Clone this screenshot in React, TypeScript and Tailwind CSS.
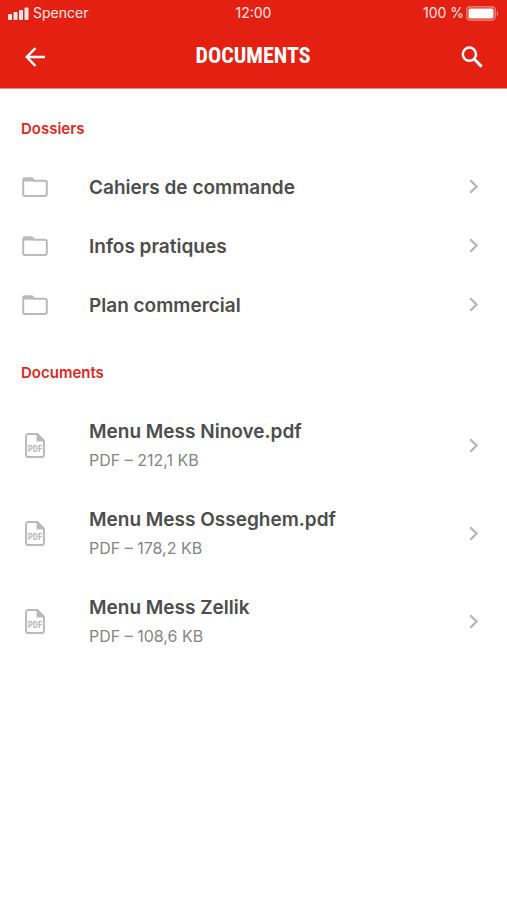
interface DocumentItem {
  name: string
  details: string
}

const folders: string[] = ['Cahiers de commande', 'Infos pratiques', 'Plan commercial']

const documents: DocumentItem[] = [
  { name: 'Menu Mess Ninove.pdf', details: 'PDF – 212,1 KB' },
  { name: 'Menu Mess Osseghem.pdf', details: 'PDF – 178,2 KB' },
  { name: 'Menu Mess Zellik', details: 'PDF – 108,6 KB' },
]

function SignalIcon() {
  return (
    <svg width="21" height="13" viewBox="0 0 21 13" fill="currentColor" aria-hidden="true">
      <rect x="0" y="7" width="4" height="6" rx="1" />
      <rect x="5.5" y="5" width="4" height="8" rx="1" />
      <rect x="11" y="3" width="4" height="10" rx="1" />
      <rect x="16.5" y="0.5" width="4" height="12.5" rx="1" />
    </svg>
  )
}

function BatteryIcon() {
  return (
    <svg width="33" height="15" viewBox="0 0 33 15" aria-hidden="true">
      <rect x="0.8" y="0.8" width="28.4" height="13.4" rx="3.5" fill="none" stroke="#fff" strokeOpacity="0.5" strokeWidth="1.2" />
      <rect x="2.5" y="2.5" width="25" height="10" rx="1.5" fill="#fff" />
      <path d="M30.8 5.2c1.6.6 1.6 4 0 4.6z" fill="#fff" fillOpacity="0.6" />
    </svg>
  )
}

function BackIcon() {
  return (
    <svg width="20" height="20" viewBox="0 0 20 20" fill="none" stroke="currentColor" strokeWidth="2.5" aria-hidden="true">
      <path d="M10.5 1 1.8 10l8.7 9M2 10h18" />
    </svg>
  )
}

function SearchIcon() {
  return (
    <svg width="22" height="22" viewBox="0 0 22 22" fill="none" stroke="currentColor" aria-hidden="true">
      <circle cx="8.4" cy="8.2" r="6.6" strokeWidth="2.5" />
      <path d="m13.2 13 7.4 7.6" strokeWidth="3" />
    </svg>
  )
}

function FolderIcon() {
  return (
    <svg width="26" height="20" viewBox="0 0 26 20" aria-hidden="true">
      <path d="M3 1.2h6.8l2.4 2.6H23a1.8 1.8 0 0 1 1.8 1.8v11.6A1.8 1.8 0 0 1 23 19H3a1.8 1.8 0 0 1-1.8-1.8V3A1.8 1.8 0 0 1 3 1.2z" fill="none" stroke="#bababa" strokeWidth="2" />
      <path d="M2 1.5h7.6l2.4 3H2z" fill="#bababa" />
    </svg>
  )
}

function PdfIcon() {
  return (
    <svg width="20" height="25" viewBox="0 0 20 25" aria-hidden="true">
      <path d="M3 1.1h9.5l6.4 6.6V22a1.9 1.9 0 0 1-1.9 1.9H3A1.9 1.9 0 0 1 1.1 22V3A1.9 1.9 0 0 1 3 1.1z" fill="none" stroke="#bababa" strokeWidth="2" />
      <path d="M11.5 1 19 8.5h-7.5z" fill="#bababa" />
      <text
        x="10"
        y="18.5"
        textAnchor="middle"
        fontSize="9"
        fill="#b0b0b0"
        className="font-['Roboto_Condensed','Roboto',sans-serif] font-medium"
      >
        PDF
      </text>
    </svg>
  )
}

function ChevronIcon() {
  return (
    <svg width="10" height="15" viewBox="0 0 10 15" fill="none" stroke="#b5b5b5" strokeWidth="2.2" aria-hidden="true">
      <path d="m1.2 1.2 6.4 6.3-6.4 6.3" />
    </svg>
  )
}

function SectionTitle({ children }: { children: string }) {
  return <h2 className="mb-[18px] text-[15px] leading-5 font-semibold text-[#dc291e]">{children}</h2>
}

export default function App() {
  return (
    <div className="min-h-screen bg-white font-['Inter','Liberation_Sans',sans-serif]">
      <header className="border-b border-[#f0897f] bg-[#e42013] text-white">
        <div className="grid h-[26px] grid-cols-3 items-center px-2 text-sm text-white/90">
          <div className="flex items-center gap-1">
            <SignalIcon />
            <span>Spencer</span>
          </div>
          <span className="text-center">12:00</span>
          <div className="flex items-center justify-end gap-0.5">
            <span>100 %</span>
            <BatteryIcon />
          </div>
        </div>
        <div className="flex h-[62px] items-center justify-between pr-6 pl-[25px]">
          <button type="button" aria-label="Retour">
            <BackIcon />
          </button>
          <h1 className="pb-0.5 font-['Roboto_Condensed','Roboto',sans-serif] text-[22px] leading-7 font-bold">
            DOCUMENTS
          </h1>
          <button type="button" aria-label="Rechercher">
            <SearchIcon />
          </button>
        </div>
      </header>

      <main className="px-[21px]">
        <section className="pt-[30px]">
          <SectionTitle>Dossiers</SectionTitle>
          <ul>
            {folders.map((name) => (
              <li key={name}>
                <a href="#" className="flex h-[59px] items-center pr-[7px]">
                  <span className="flex w-7 justify-center">
                    <FolderIcon />
                  </span>
                  <span className="ml-10 flex-1 pt-0.5 text-[19px] leading-7 font-semibold text-[#4d4d4d]">{name}</span>
                  <ChevronIcon />
                </a>
              </li>
            ))}
          </ul>
        </section>

        <section className="pt-[29px]">
          <SectionTitle>Documents</SectionTitle>
          <ul>
            {documents.map((item) => (
              <li key={item.name}>
                <a href="#" className="flex h-[88px] items-center pr-[7px]">
                  <span className="flex w-7 justify-center">
                    <PdfIcon />
                  </span>
                  <span className="ml-10 flex flex-1 flex-col pt-0.5">
                    <span className="text-[19px] leading-7 font-semibold text-[#4d4d4d]">{item.name}</span>
                    <span className="text-base leading-7 text-[#858585]">{item.details}</span>
                  </span>
                  <ChevronIcon />
                </a>
              </li>
            ))}
          </ul>
        </section>
      </main>
    </div>
  )
}
